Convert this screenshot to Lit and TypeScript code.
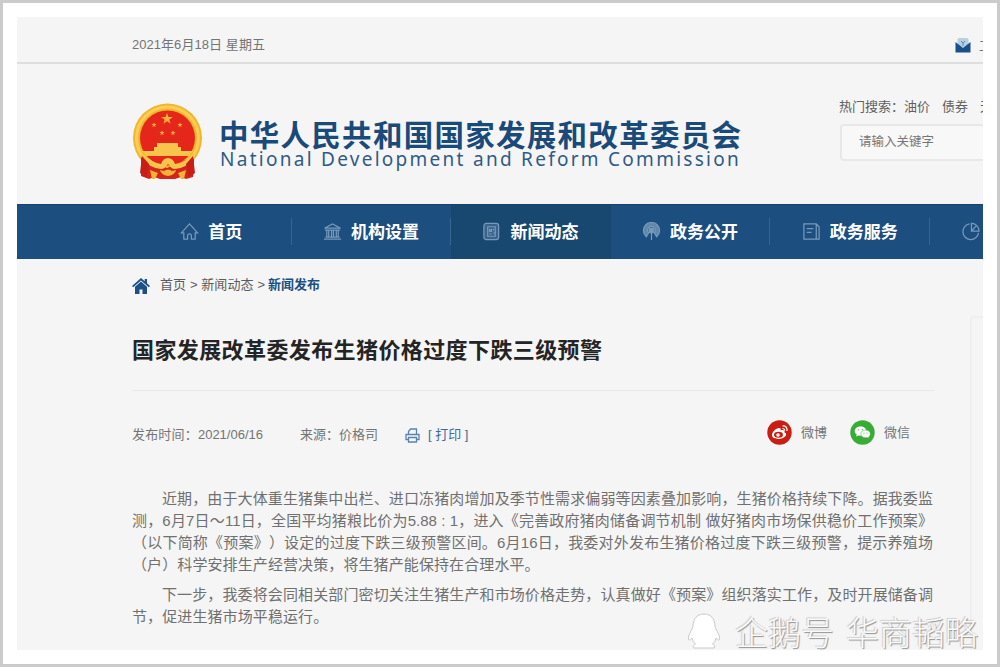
import { LitElement, html, css, svg } from "lit";
import { customElement } from "lit/decorators.js";

const paragraphs = [
  [
    { t: "近期，由于大体重生猪集中出栏、进口冻猪肉增加及季节性需求偏弱等因素叠加影响，生猪价格持续下降。据我委监", cls: "line indent" },
    { t: "测，6月7日～11日，全国平均猪粮比价为5.88 : 1，进入《完善政府猪肉储备调节机制 做好猪肉市场保供稳价工作预案》", cls: "line" },
    { t: "（以下简称《预案》）设定的过度下跌三级预警区间。6月16日，我委对外发布生猪价格过度下跌三级预警，提示养殖场", cls: "line" },
    { t: "（户）科学安排生产经营决策，将生猪产能保持在合理水平。", cls: "line last" },
  ],
  [
    { t: "下一步，我委将会同相关部门密切关注生猪生产和市场价格走势，认真做好《预案》组织落实工作，及时开展储备调", cls: "line indent" },
    { t: "节，促进生猪市场平稳运行。", cls: "line last" },
  ],
];

const navIcons = {
  home: svg`<path d="M1.500 11.500L10 2l8.500 9.500H16V18h-4v-3.500a2 2 0 0 0-4 0V18H4v-6.500z" />`,
  bank: svg`<path d="M1.500 6.500L10 2l8.500 4.500zM2 8.500h16M1 18h18M2.500 16h15M4 9v6.500M6 9v6.500M9 9v6.500M11 9v6.500M14 9v6.500M16 9v6.500" />`,
  news: svg`<rect x="2" y="1.500" width="15.500" height="17" rx="2.500" fill="currentColor" fill-opacity=".35"/><path d="M6 5h8v10H6zM8 8h2v2H8zM12 7v2M8 12.500h2M12 12l2-1" />`,
  open: svg`<path d="M4.500 15.500a8.500 8.500 0 1 1 11 0l-2.500-4a4 4 0 1 0-6 0z" fill="currentColor" fill-opacity=".75"/><circle cx="10" cy="9" r="2.500" fill="currentColor"/><path d="M10 10v9" />`,
  doc: svg`<path d="M2 2h13l3 3v13H2zM15 2v16M5 7h7M5 11h5" />`,
  pie: svg`<path d="M9 2a8.300 8.300 0 1 0 9.500 9.500M11 1.500v8h8a8 8 0 0 0-8-8zM11 9.500l5-5.500" />`,
};

@customElement("app-root")
export class AppRoot extends LitElement {
  static styles = css`
    :host {
      display: block;
      width: 1000px;
      height: 667px;
      font-family: "Liberation Sans", "Noto Sans CJK SC", sans-serif;
      color: #747474;
      font-size: 13px;
      text-spacing-trim: space-all;
    }
    * { box-sizing: border-box; }
    svg { display: block; flex: none; }
    .frame {
      position: relative;
      width: 1000px;
      height: 667px;
      border: 3px solid #cbcbcb;
      background: #fff;
      padding: 14px;
      overflow: hidden;
    }
    .page {
      width: 966px;
      height: 633px;
      overflow: hidden;
      background: #f5f5f5;
      display: flex;
      flex-direction: column;
    }
    .fit { display: block; white-space: nowrap; text-align: justify; text-align-last: justify; flex: none; }
    .top {
      height: 47px;
      flex: none;
      display: flex;
      align-items: center;
      border-bottom: 2px solid #dedede;
      padding: 10px 0 0 115px;
    }
    .date { width: 133px; line-height: 20px; }
    .mail { display: flex; align-items: center; gap: 8px; margin-left: 690px; white-space: nowrap; }
    .header { height: 140px; flex: none; display: flex; padding-left: 115px; border-bottom: 1px solid #f8f1ee; }
    .emblem { margin-top: 39px; }
    .names { margin: 51px 0 0 16px; width: 523px; flex: none; color: #1a4a7a; }
    .zh { width: 522px; font: 700 29.500px/36px "Noto Sans CJK SC", sans-serif; }
    .en { font: 400 19px/20px "Noto Sans", sans-serif; letter-spacing: 2.270px; white-space: nowrap; margin: -2px 0 0 1px; color: #2f5b88; }
    .search { margin: 33px 0 0 97px; width: 200px; flex: none; color: #606060; }
    .hot { display: flex; line-height: 20px; white-space: nowrap; }
    .hot span + span { margin-left: 12px; }
    .box {
      margin: 7px 0 0 1px;
      width: 200px;
      height: 37px;
      border: 2px solid #e8e8e8;
      border-radius: 4px;
      background: #f8f8f8;
      padding-left: 17px;
      line-height: 32px;
      font-size: 12.500px;
      color: #777;
    }
    .nav { height: 55px; flex: none; display: flex; background: #1c4f80; border-top: 1px solid #16436f; padding-left: 115px; }
    .cell { width: 159.600px; height: 54px; flex: none; display: flex; align-items: center; justify-content: center; gap: 9px; color: #7899b9; position: relative; padding: 0 1px 2px 0; }
    .cell b { font: 700 17px/24px "Noto Sans CJK SC", sans-serif; color: #fff; }
    .cell::after { content: ""; position: absolute; right: 0; top: 13px; width: 1px; height: 27px; background: #386490; }
    .cell.active { background: #184870; }
    .cell.active::after { display: none; }
    .cell.cut { justify-content: flex-start; padding-left: 31px; }
    .body { display: flex; flex: 1; padding-left: 115px; }
    .article { width: 802px; flex: none; }
    .crumbs { display: flex; align-items: center; margin-top: 17px; height: 20px; white-space: nowrap; color: #5c5c5c; line-height: 18px; }
    .crumbs .trail { width: 105px; margin: -2px 0 0 10px; }
    .crumbs b { width: 52px; margin: -2px 0 0 3px; color: #1c4f80; }
    .title { width: 470px; margin: 35px 0 0; font: 700 22px/34px "Noto Sans CJK SC", sans-serif; color: #242424; }
    .rule { height: 1px; background: #e8e8e8; margin-top: 25px; }
    .meta { display: flex; align-items: center; height: 30px; margin-top: 29px; white-space: nowrap; line-height: 20px; }
    .meta > * { flex: none; }
    .when { width: 131px; }
    .from { width: 78px; margin-left: 37px; }
    .print { display: flex; align-items: center; gap: 8px; margin-left: 27px; color: #3f6a96; width: 66px; }
    .share { display: flex; align-items: center; margin: -5px 0 0 296px; }
    .share span { margin: 0 23px 0 9px; }
    .text { margin-top: 38px; display: flex; flex-direction: column; gap: 8px; font-size: 15px; color: #707070; }
    .line { width: 801px; height: 22px; line-height: 22px; white-space: nowrap; text-align: justify; text-align-last: justify; }
    .indent { padding-left: 30px; }
    .last { text-align-last: left; letter-spacing: .1px; }
    .aside { margin: 57px 0 0 36px; width: 30px; height: 340px; border: 2px solid #efefef; border-radius: 4px; flex: none; }
    .mark { position: absolute; left: 683px; top: 606px; display: flex; align-items: center; color: #fafafa; }
    .mark span { font: 300 33px/44px "Noto Sans CJK SC", sans-serif; text-shadow: 1px 1px 1px #909090, -1px -1px 1px #cfcfcf; white-space: nowrap; }
    .mark .a { margin-left: 13px; }
    .mark .b { margin-left: 12px; }
  `;

  private cell(icon: unknown, label: string, cls = "") {
    return html`<div class="cell ${cls}">
      <svg width="19" height="19" viewBox="0 0 20 20" fill="none" stroke="currentColor" stroke-width="1.3">${icon}</svg>
      ${label ? html`<b>${label}</b>` : ""}
    </div>`;
  }

  private emblem() {
    const star = "M0-5L1.200-1.600 4.800-1.600 1.900.600 3 4 0 1.900-3 4-1.900.600-4.800-1.600-1.200-1.600Z";
    return html`<svg class="emblem" width="71" height="78" viewBox="0 0 71 78">
      <circle cx="35.500" cy="34.500" r="34.500" fill="#f1b52f" transform="translate(0 .5)" />
      <circle cx="35.500" cy="35" r="31" fill="none" stroke="#f8cf52" stroke-width="3" />
      <path d="M9 53L35 65 62 53v12l-1 9-7 2-5-2-6 2H28l-6-2-5 2-8-3z" fill="#d32618" />
      <circle cx="35.500" cy="35" r="27.500" fill="#e5261b" />
      <g fill="#f3b23a">
        <path d=${star} transform="translate(35 16) scale(1.200)" />
        <path d=${star} transform="translate(22 22) scale(.55)" />
        <path d=${star} transform="translate(48 22) scale(.55)" />
        <path d=${star} transform="translate(30 30) scale(.55)" />
        <path d=${star} transform="translate(41 30) scale(.55)" />
        <path d="M25 40h21v4h3v4h12l-4 5H14l-4-5h12v-4h3z" fill="#f8c54c" />
        <path d="M10 50q10 10 19 11 2-6 7-6t7 6q9-1 19-11l1 4q-8 11-20 12-4 0-5-3l-2-2-2 2q-1 3-5 3-12-1-20-12z" fill="#f8c54c" />
        <path d="M28 67l4 1q4-3 8 0l4-1q-1 5-8 6-7-1-8-6zM18 67l8 3-3 6h-3zM54 67l-8 3 3 6h3z" />
      </g>
      <path d="M10 53L8 70l7 5 2-14zM61 53l2 17-7 5-2-14z" fill="#c71f18" />
    </svg>`;
  }

  render() {
    return html`<div class="frame" lang="zh-CN">
      <div class="page">
        <div class="top">
          <span class="date fit">2021年6月18日 星期五</span>
          <div class="mail">
            <svg width="16" height="16" viewBox="0 0 16 16">
              <rect x="2.500" y="1" width="11" height="10" rx="1.500" fill="#b9cfe2" />
              <path d="M6 4l2 2 2-2M8 6v3" stroke="#5e87ab" fill="none" />
              <path d="M.500 5L8 11l7.500-6v10.500H.500z" fill="#19508a" />
            </svg><span>工作邮箱</span>
          </div>
        </div>
        <div class="header">
          ${this.emblem()}
          <div class="names">
            <div class="zh fit">中华人民共和国国家发展和改革委员会</div>
            <div class="en">National Development and Reform Commission</div>
          </div>
          <div class="search">
            <div class="hot"><span>热门搜索：油价</span><span>债券</span><span>天然气</span></div>
            <div class="box">请输入关键字</div>
          </div>
        </div>
        <div class="nav">
          ${this.cell(navIcons.home, "首页")}
          ${this.cell(navIcons.bank, "机构设置")}
          ${this.cell(navIcons.news, "新闻动态", "active")}
          ${this.cell(navIcons.open, "政务公开")}
          ${this.cell(navIcons.doc, "政务服务")}
          ${this.cell(navIcons.pie, "", "cut")}
        </div>
        <div class="body">
          <div class="article">
            <div class="crumbs">
              <svg width="18" height="16" viewBox="0 0 18 16" fill="#1c5087">
                <path d="M9 0L0 8l1.200 1.300L9 2.600l7.800 6.700L18 8l-3-2.700V1h-2.300v2.200z" />
                <path d="M9 3.500L3 8.700V16h4.500v-4.500h3V16H15V8.700z" />
              </svg>
              <span class="trail fit">首页 &gt; 新闻动态 &gt;</span><b class="fit">新闻发布</b>
            </div>
            <h1 class="title fit">国家发展改革委发布生猪价格过度下跌三级预警</h1>
            <div class="rule"></div>
            <div class="meta">
              <span class="when fit">发布时间：2021/06/16</span>
              <span class="from fit">来源：价格司</span>
              <span class="print">
                <svg width="15" height="15" viewBox="0 0 15 15" fill="none" stroke="#5983ae" stroke-width="1.300">
                  <path d="M3.500 6V3.500L5.500 1H11.500V6M3 11.500H1V6.500H14v5H12M3.500 9.500h8V14h-8z" />
                </svg><span>[ 打印 ]</span>
              </span>
              <div class="share">
                <svg width="25" height="25" viewBox="0 0 25 25">
                  <circle cx="12.500" cy="12.500" r="12.200" fill="#c91e12" />
                  <path d="M5 15c0-3 4-7 7-7 2 0 2 1 1.500 2.500 3-1 4.500 0 4 2 2 .500 2 2 1 3.500-3 4-13.500 4-13.500-1z" fill="#fff" />
                  <ellipse cx="11.500" cy="14.800" rx="4.500" ry="3" fill="#c91e12" />
                  <circle cx="11" cy="15" r="1.800" fill="#fff" />
                  <path d="M15.500 6c3-.500 5 1.500 4.500 5M15.500 8.500c1.500 0 2.300.800 2.200 2.200" stroke="#fff" stroke-width="1.200" fill="none" />
                </svg><span>微博</span>
                <svg width="25" height="25" viewBox="0 0 25 25">
                  <circle cx="12.500" cy="12.500" r="12.200" fill="#38ad35" />
                  <path d="M10.500 6.500c-3.300 0-5.800 2-5.800 4.600 0 1.500.800 2.700 2 3.500l-.500 1.900 2.200-1.100 2.100.300c3.300 0 5.800-2 5.800-4.600s-2.500-4.600-5.800-4.600z" fill="#fff" />
                  <path d="M15.500 10c-2.700 0-4.700 1.700-4.700 3.900s2 3.900 4.700 3.900l1.500-.200 2 1-.500-1.600c1.200-.800 1.800-1.900 1.800-3.100 0-2.200-2.100-3.900-4.800-3.900z" fill="#fff" stroke="#38ad35" stroke-width=".5" />
                  <g fill="#38ad35"><circle cx="8.500" cy="9.800" r=".6" /><circle cx="12.300" cy="9.300" r=".6" /><circle cx="14" cy="13" r=".5" /><circle cx="17" cy="13" r=".5" /></g>
                </svg><span>微信</span>
              </div>
            </div>
            <div class="text">
              ${paragraphs.map((p) => html`<div>${p.map((l) => html`<div class=${l.cls}>${l.t}</div>`)}</div>`)}
            </div>
          </div>
          <div class="aside"></div>
        </div>
      </div>
      <div class="mark">
        <svg width="36" height="38" viewBox="0 0 36 38">
          <path d="M18 2c-7 0-11 5-11 12 0 3-5 8-4.500 13 .200 2 2 1 3.500-1 .500 3 2 5 3.500 6-2 1-3 2.500-1.500 4h20c1.500-1.500.500-3-1.500-4 1.500-1 3-3 3.500-6 1.500 2 3.300 3 3.500 1 .500-5-4.500-10-4.500-13 0-7-4-12-11-12z" fill="#fff" stroke="#c9c9c9" />
        </svg>
        <span class="a">企鹅号</span><span class="b">华商韬略</span>
      </div>
    </div>`;
  }
}
